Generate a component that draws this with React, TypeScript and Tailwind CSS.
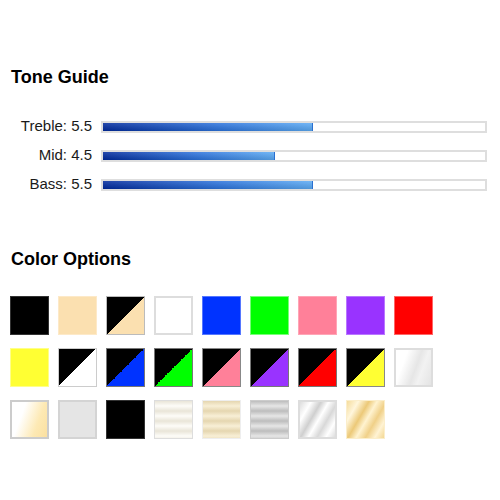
const tones = [
  { label: "Treble: 5.5", fill: "w-[55%]" },
  { label: "Mid: 4.5", fill: "w-[45%]" },
  { label: "Bass: 5.5", fill: "w-[55%]" },
];

const swatches = [
  // row 1
  "bg-black border-[#333]",
  "bg-[#fbe0b0] border-[#fde9c8]",
  "bg-[linear-gradient(to_bottom_right,#000_50%,#fbe0b0_50%)] border-[#bbb]",
  "bg-white border-[#ddd] border-2",
  "bg-[#0033ff] border-[#5577ff]",
  "bg-[#00ff00] border-[#77ff77]",
  "bg-[#ff8099] border-[#ffa5b6]",
  "bg-[#9933ff] border-[#b877ff]",
  "bg-[#ff0000] border-[#ff6666]",
  // row 2
  "bg-[#ffff33] border-[#ffff88]",
  "bg-[linear-gradient(to_bottom_right,#000_50%,#fff_50%)] border-[#ccc]",
  "bg-[linear-gradient(to_bottom_right,#000_50%,#0033ff_50%)] border-[#777]",
  "bg-[linear-gradient(to_bottom_right,#000_50%,#00ff00_50%)] border-[#777]",
  "bg-[linear-gradient(to_bottom_right,#000_50%,#ff8099_50%)] border-[#888]",
  "bg-[linear-gradient(to_bottom_right,#000_50%,#9933ff_50%)] border-[#777]",
  "bg-[linear-gradient(to_bottom_right,#000_50%,#ff0000_50%)] border-[#777]",
  "bg-[linear-gradient(to_bottom_right,#000_50%,#ffff33_50%)] border-[#888]",
  "bg-[linear-gradient(110deg,#fff_25%,#e6e6e6_55%,#f2f2f2_70%,#e4e4e4_100%)] border-[#ddd] border-2",
  // row 3
  "bg-[linear-gradient(110deg,#fff_30%,#fde9b4_70%,#fbe0a0_100%)] border-[#ccc] border-2",
  "bg-[#e5e5e5] border-[#d4d4d4] border-2",
  "bg-black border-[#333]",
  "bg-[repeating-linear-gradient(to_bottom,#e9e5d8_0px,#fdfcf8_5px,#e9e5d8_10px)] border-[#ddd]",
  "bg-[repeating-linear-gradient(to_bottom,#e5d6b0_0px,#f8efd6_5px,#e5d6b0_10px)] border-[#eee]",
  "bg-[repeating-linear-gradient(to_bottom,#bdbdbd_0px,#e6e6e6_5px,#bdbdbd_10px)] border-[#ccc]",
  "bg-[linear-gradient(120deg,#ddd_0%,#fff_20%,#cfcfcf_38%,#fff_52%,#d8d8d8_68%,#fff_84%,#ddd_100%)] border-[#ddd] border-2",
  "bg-[linear-gradient(120deg,#f5dc9c_0%,#fff6dc_20%,#ecc978_38%,#fff3d0_52%,#f0d088_68%,#fff3d4_84%,#f3d792_100%)] border-[#fbeecb]",
];

export default function App() {
  return (
    <main className="w-[500px] h-[500px] bg-white pt-[66px] font-['Liberation_Sans',Arial,sans-serif]">
      {/* Tone Guide */}
      <section className="px-[11px]">
        <h2 className="text-[18px] leading-[22px] font-bold text-black">Tone Guide</h2>
        <div className="mt-[24px] flex flex-col">
          {tones.map((t) => (
            <div key={t.label} className="flex items-center h-[29px]">
              <div className="w-[81px] text-right text-[15px] text-[#1a1a1a] pr-0">{t.label}</div>
              <div className="ml-[9px] w-[386px] h-[12px] border-2 border-[#dedede] bg-white">
                <div
                  className={
                    "h-full border-r border-[#2a6fd0] bg-[linear-gradient(to_bottom,rgba(255,255,255,0.15),rgba(0,0,0,0.12)),linear-gradient(to_right,#002a9e,#2a72dd_55%,#5aaaf5)] " +
                    t.fill
                  }
                />
              </div>
            </div>
          ))}
        </div>
      </section>

      {/* Color Options */}
      <section className="pl-[11px] pr-[10px] mt-[49px]">
        <h2 className="text-[18px] leading-[22px] font-bold text-black">Color Options</h2>
        <div className="mt-[26px] -ml-px grid grid-cols-[repeat(9,39px)] gap-x-[9px] gap-y-[13px]">
          {swatches.map((s, i) => (
            <div key={i} className={"w-[39px] h-[39px] border " + s} />
          ))}
        </div>
      </section>
    </main>
  );
}
